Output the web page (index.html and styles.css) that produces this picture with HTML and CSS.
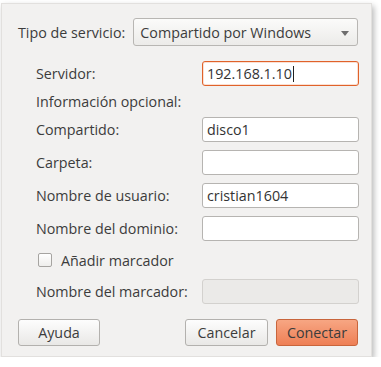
FILE: index.html
```html
<!DOCTYPE html>
<html lang="es">
<head>
  <meta charset="UTF-8">
  <title>Conectar con el servidor</title>
  <link rel="stylesheet" href="styles.css">
</head>
<body>
  <div class="dialog">
    <div class="service-row">
      <span class="label">Tipo de servicio:</span>
      <div class="combo">
        <span>Compartido por Windows</span>
        <span class="combo__arrow"></span>
      </div>
    </div>

    <div class="form">
      <span class="label">Servidor:</span>
      <div class="entry entry--focus">192.168.1.10<span class="caret"></span></div>

      <span class="label form__full">Información opcional:</span>

      <span class="label">Compartido:</span>
      <div class="entry">disco1</div>

      <span class="label">Carpeta:</span>
      <div class="entry"></div>

      <span class="label">Nombre de usuario:</span>
      <div class="entry">cristian1604</div>

      <span class="label">Nombre del dominio:</span>
      <div class="entry"></div>

      <label class="check form__full"><span class="check__box"></span>Añadir marcador</label>

      <span class="label">Nombre del marcador:</span>
      <div class="entry entry--disabled"></div>
    </div>

    <div class="buttons">
      <button class="btn btn--help">Ayuda</button>
      <div class="buttons__right">
        <button class="btn btn--cancel">Cancelar</button>
        <button class="btn btn--primary">Conectar</button>
      </div>
    </div>
  </div>
</body>
</html>
```

FILE: styles.css
```css
html, body {
  margin: 0;
  background: #ffffff;
}

body {
  font-family: "Open Sans", "DejaVu Sans", sans-serif;
  font-size: 14.3px;
  color: #3c3c3c;
}

.dialog {
  box-sizing: border-box;
  width: 371px;
  height: 354px;
  margin: 3px 0 0 1px;
  background: #f2f1f0;
  border: 1px solid #e2e0de;
  box-shadow: 2px 3px 6px rgba(0, 0, 0, 0.28);
  padding: 14px 13px 0 16px;
}

.service-row {
  display: flex;
  align-items: center;
  gap: 8px;
}

.combo {
  box-sizing: border-box;
  width: 225px;
  height: 28px;
  margin-left: auto;
  display: flex;
  align-items: center;
  justify-content: space-between;
  padding: 0 8px 0 6px;
  border: 1px solid #b8b6b3;
  border-radius: 3px;
  background: linear-gradient(#fbfbfa, #ecebe9);
  color: #3c3c3c;
}

.combo__arrow {
  width: 0;
  height: 0;
  border-left: 4px solid transparent;
  border-right: 4px solid transparent;
  border-top: 5px solid #6e6e6e;
  margin-top: 2px;
}

.form {
  display: grid;
  grid-template-columns: 166px 157px;
  grid-template-rows: 25px 15px 25px 25px 25px 25px 22px 25px;
  row-gap: 8px;
  align-items: center;
  margin: 15px 0 0 18px;
}

.form__full {
  grid-column: 1 / 3;
}

.label {
  white-space: nowrap;
}

.entry {
  box-sizing: border-box;
  height: 25px;
  display: flex;
  align-items: center;
  padding: 0 4px;
  background: #ffffff;
  border: 1px solid #b6b4b1;
  border-radius: 3px;
  color: #333333;
}

.entry--focus {
  border-color: #e0622a;
  box-shadow: inset 0 0 0 1px rgba(240, 130, 80, 0.25);
}

.entry--disabled {
  background: #ebeae8;
  border-color: #d3d1ce;
}

.caret {
  width: 1px;
  height: 16px;
  background: #222222;
  margin-left: 1px;
}

.check {
  display: flex;
  align-items: center;
  gap: 9px;
  padding-left: 2px;
  height: 22px;
}

.check__box {
  box-sizing: border-box;
  width: 14px;
  height: 14px;
  border: 1px solid #a6a4a1;
  border-radius: 2px;
  background: linear-gradient(#ffffff, #efeeec);
}

.buttons {
  display: flex;
  justify-content: space-between;
  margin-top: 15px;
}

.buttons__right {
  display: flex;
  gap: 8px;
}

.btn {
  box-sizing: border-box;
  height: 27px;
  font: inherit;
  color: #3c3c3c;
  border: 1px solid #b3b1ae;
  border-radius: 3px;
  background: linear-gradient(#fdfdfd, #e9e8e6);
  padding: 0;
}

.btn--help {
  width: 82px;
}

.btn--cancel {
  width: 83px;
}

.btn--primary {
  width: 82px;
  border-color: #c8653c;
  background: linear-gradient(#f7a683, #ee7f55);
}
```
